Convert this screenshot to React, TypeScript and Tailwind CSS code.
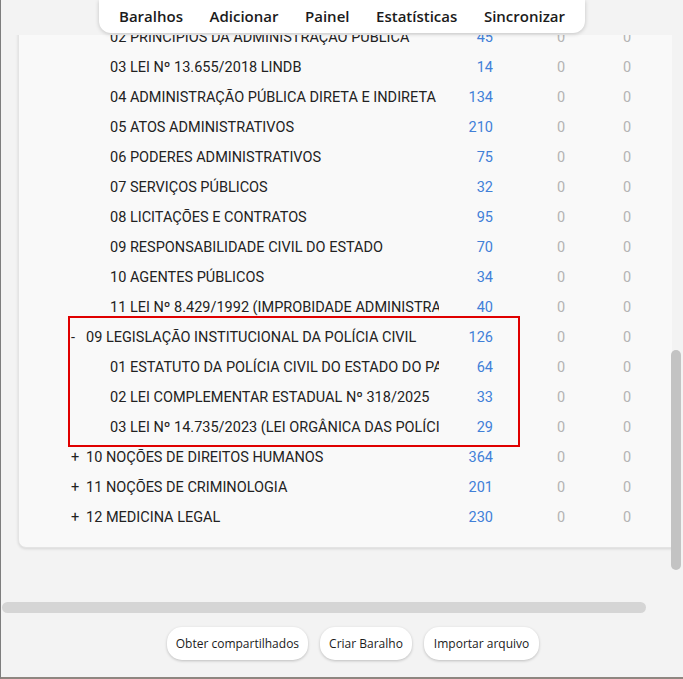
import React from "react";

type Row = { name: string; count: number; level: 0 | 1; sign?: "+" | "-"; anchor?: boolean };

const before: Row[] = [
  { name: "08 DIREITO ADMINISTRATIVO", count: 849, level: 0, sign: "-" },
  { name: "01 NOÇÕES INTRODUTÓRIAS", count: 38, level: 1 },
  { name: "02 PRINCÍPIOS DA ADMINISTRAÇÃO PÚBLICA", count: 45, level: 1, anchor: true },
  { name: "03 LEI Nº 13.655/2018 LINDB", count: 14, level: 1 },
  { name: "04 ADMINISTRAÇÃO PÚBLICA DIRETA E INDIRETA", count: 134, level: 1 },
  { name: "05 ATOS ADMINISTRATIVOS", count: 210, level: 1 },
  { name: "06 PODERES ADMINISTRATIVOS", count: 75, level: 1 },
  { name: "07 SERVIÇOS PÚBLICOS", count: 32, level: 1 },
  { name: "08 LICITAÇÕES E CONTRATOS", count: 95, level: 1 },
  { name: "09 RESPONSABILIDADE CIVIL DO ESTADO", count: 70, level: 1 },
  { name: "10 AGENTES PÚBLICOS", count: 34, level: 1 },
  { name: "11 LEI Nº 8.429/1992 (IMPROBIDADE ADMINISTRATIVA)", count: 40, level: 1 },
];

const group: Row[] = [
  { name: "09 LEGISLAÇÃO INSTITUCIONAL DA POLÍCIA CIVIL", count: 126, level: 0, sign: "-" },
  { name: "01 ESTATUTO DA POLÍCIA CIVIL DO ESTADO DO PARÁ", count: 64, level: 1 },
  { name: "02 LEI COMPLEMENTAR ESTADUAL Nº 318/2025", count: 33, level: 1 },
  { name: "03 LEI Nº 14.735/2023 (LEI ORGÂNICA DAS POLÍCIAS CIVIS)", count: 29, level: 1 },
];

const after: Row[] = [
  { name: "10 NOÇÕES DE DIREITOS HUMANOS", count: 364, level: 0, sign: "+" },
  { name: "11 NOÇÕES DE CRIMINOLOGIA", count: 201, level: 0, sign: "+" },
  { name: "12 MEDICINA LEGAL", count: 230, level: 0, sign: "+" },
];

function DeckRow({ r }: { r: Row }) {
  return (
    <div className="flex h-[30px] items-center pl-[48px]" data-anchor={r.anchor ? "1" : undefined}>
      <div className="w-[372px] overflow-hidden whitespace-nowrap text-[#222]">
        {r.level === 0 ? (
          <span className="flex">
            <span className="ml-[4px] w-[15px]">{r.sign}</span>
            <span>{r.name}</span>
          </span>
        ) : (
          <span className="ml-[43px]">{r.name}</span>
        )}
      </div>
      <div className="w-[54px] text-right text-[#4180d8]">{r.count}</div>
      <div className="ml-[35px] w-[66px] text-center text-[#b4b4b4]">0</div>
      <div className="w-[66px] text-center text-[#b4b4b4]">0</div>
    </div>
  );
}

export default function App() {
  const setScroll = (el: HTMLDivElement | null) => {
    if (!el) return;
    const a = el.querySelector("[data-anchor]") as HTMLElement | null;
    if (a) {
      const top = a.getBoundingClientRect().top - el.getBoundingClientRect().top + el.scrollTop;
      el.scrollTop = top + 12;
    }
  };

  return (
    <div
      className="relative h-[679px] w-[683px] overflow-hidden border-b-2 border-l border-b-[#8e8680] border-l-[#7d7d7d] bg-[#f3f3f3]"
      style={{ fontFamily: '"Open Sans", "Noto Sans", sans-serif' }}
    >
      <div className="flex h-full flex-col">
        <div className="relative z-10 flex h-[35px] shrink-0 justify-center">
          <div className="flex h-[33px] w-[486px] items-center justify-between rounded-b-[12px] bg-white px-[20px] text-[15px] font-semibold text-[#1b1b1b] shadow-[0_1px_4px_rgba(0,0,0,0.2)]">
            <span>Baralhos</span>
            <span>Adicionar</span>
            <span>Painel</span>
            <span>Estatísticas</span>
            <span>Sincronizar</span>
          </div>
        </div>
        <div
          ref={setScroll}
          className="relative h-[581px] w-[671px] shrink-0 overflow-hidden text-[14.5px]"
          style={{ fontFamily: 'Roboto, "Liberation Sans", sans-serif' }}
        >
          <div className="pb-[120px] pl-[17px] pt-[16px]">
            <div className="w-[700px] rounded-lg border border-[#e4e4e4] bg-[#f9f9f9] pb-[14px] pt-[8px] shadow-[0_1px_3px_rgba(0,0,0,0.12)]">
              <div className="flex h-[40px] items-center pl-[48px] font-medium text-[#333]">
                <div className="w-[426px] pl-[19px]">Baralho</div>
                <div className="ml-[35px] w-[66px] text-center">Novos</div>
                <div className="w-[66px] text-center">Aprender</div>
              </div>
              {before.map((r) => (
                <DeckRow key={r.name} r={r} />
              ))}
              <div className="relative">
                {group.map((r) => (
                  <DeckRow key={r.name} r={r} />
                ))}
                <div className="pointer-events-none absolute -bottom-[4px] -top-[7px] left-[49px] w-[452px] border-2 border-[#e00000]" />
              </div>
              {after.map((r) => (
                <DeckRow key={r.name} r={r} />
              ))}
            </div>
          </div>
        </div>
        <div className="flex flex-1 items-start justify-center gap-[12px] pl-[22px] pt-[11px] text-[12px] text-[#1b1b1b]">
          <button className="h-[33px] rounded-[15px] bg-white px-[9px] shadow-[0_1px_3px_rgba(0,0,0,0.22)]">
            Obter compartilhados
          </button>
          <button className="h-[33px] rounded-[15px] bg-white px-[9px] shadow-[0_1px_3px_rgba(0,0,0,0.22)]">
            Criar Baralho
          </button>
          <button className="h-[33px] rounded-[15px] bg-white px-[10px] shadow-[0_1px_3px_rgba(0,0,0,0.22)]">
            Importar arquivo
          </button>
        </div>
      </div>

      <div className="absolute left-[1px] top-[602px] h-[11px] w-[644px] rounded-full bg-[#d5d5d5]" />
      <div className="absolute right-[2px] top-[350px] h-[220px] w-[10px] rounded-full bg-[#c3c3c3]" />
    </div>
  );
}
